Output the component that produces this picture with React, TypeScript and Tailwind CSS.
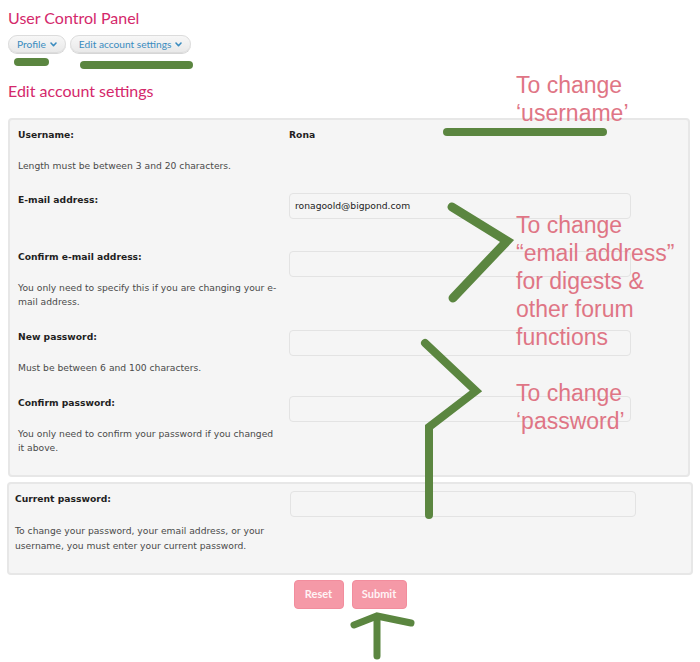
import type { ReactNode } from "react";

const formFont = { fontFamily: '"DejaVu Sans", Verdana, sans-serif' };

// 파란 글씨 알약 탭
const Pill = ({ children }: { children: ReactNode }) => (
  <button className="flex h-[18px] items-center gap-[4px] rounded-full border border-[#dcdcdc] bg-gradient-to-b from-[#f7f7f7] to-[#e9e9e9] px-[8px] text-[10.2px] leading-none text-[#3b8cbf] shadow-[0_1px_0_#d6d6d6]">
    {children}
    <svg viewBox="0 0 8 6" className="h-[5px] w-[7px]" aria-hidden="true">
      <path d="M1 1.2 L4 4.4 L7 1.2" fill="none" stroke="#3b8cbf" strokeWidth="1.9" strokeLinecap="round" strokeLinejoin="round" />
    </svg>
  </button>
);

const Field = ({ w, mt = "mt-0" }: { w: string; mt?: string }) => (
  <div className={`h-[26px] rounded-[4px] border-[1.5px] border-[#e3e3e3] bg-[#f5f5f5] ${w} ${mt}`} />
);

const Row = ({
  label,
  help,
  labelWidth,
  children,
  className,
}: {
  label: string;
  help?: ReactNode;
  labelWidth: string;
  children?: ReactNode;
  className?: string;
}) => (
  <div className={`flex ${className ?? ""}`}>
    <div className={`shrink-0 ${labelWidth}`}>
      <div className="text-[9.2px] font-bold leading-[14px] text-[#1f1f1f]">{label}</div>
      {help}
    </div>
    <div className="flex-1">{children}</div>
  </div>
);

const Help = ({ children, leading = "leading-[14px]" }: { children: ReactNode; leading?: string }) => (
  <p className={`mt-[17px] whitespace-nowrap text-[9.2px] text-[#4a4a4a] ${leading}`}>{children}</p>
);

const Annotation = ({ lines, className }: { lines: string[]; className: string }) => (
  <div
    className={`absolute text-[23px] leading-[28px] text-[#df7585] ${className}`}
    style={{ fontFamily: '"Liberation Sans", Arial, sans-serif' }}
  >
    {lines.map((l) => (
      <div key={l}>{l}</div>
    ))}
  </div>
);

const App = () => {
  return (
    <div className="relative h-[662px] w-[700px] overflow-hidden bg-white">
      <div className="px-[8px] pt-[8px]" style={{ fontFamily: "Lato, sans-serif" }}>
        <h1 className="text-[16px] leading-5 text-[#d4286b]">User Control Panel</h1>
        <div className="mt-[7px] flex gap-[4px]">
          <Pill>Profile</Pill>
          <Pill>Edit account settings</Pill>
        </div>
        <h2 className="mt-[28px] text-[16px] leading-5 text-[#d4286b]">Edit account settings</h2>
      </div>

      <div style={formFont}>
        <section className="ml-[8px] mr-[10px] mt-[17px] rounded-[4px] border-2 border-[#e7e7e7] bg-[#f5f5f5] pb-[20px] pl-[8px] pt-[8px]">
          <Row
            label="Username:"
            labelWidth="w-[271px]"
            help={<Help>Length must be between 3 and 20 characters.</Help>}
            className="mb-[20px]"
          >
            <div className="text-[9.2px] font-bold leading-[14px] text-[#1f1f1f]">Rona</div>
          </Row>
          <Row label="E-mail address:" labelWidth="w-[271px]" className="mb-[31px]">
            <div className="flex h-[26px] w-[342px] items-center rounded-[4px] border-[1.5px] border-[#e3e3e3] bg-[#f5f5f5] px-[5px] text-[9.2px] text-[#222]">
              ronagoold@bigpond.com
            </div>
          </Row>
          <Row
            label="Confirm e-mail address:"
            labelWidth="w-[271px]"
            help={
              <Help>
                You only need to specify this if you are changing your e-
                <br />
                mail address.
              </Help>
            }
            className="mb-[21px]"
          >
            <Field w="w-[342px]" mt="mt-[1px]" />
          </Row>
          <Row
            label="New password:"
            labelWidth="w-[271px]"
            help={<Help>Must be between 6 and 100 characters.</Help>}
            className="mb-[21px]"
          >
            <Field w="w-[342px]" />
          </Row>
          <Row
            label="Confirm password:"
            labelWidth="w-[271px]"
            help={
              <Help>
                You only need to confirm your password if you changed
                <br />
                it above.
              </Help>
            }
          >
            <Field w="w-[342px]" />
          </Row>
        </section>

        <section className="mx-[7px] mt-[5px] rounded-[4px] border-2 border-[#e7e7e7] bg-[#f5f5f5] pb-[20px] pl-[6px] pt-[8px]">
          <Row
            label="Current password:"
            labelWidth="w-[275px]"
            help={
              <Help leading="leading-[15px]">
                To change your password, your email address, or your
                <br />
                username, you must enter your current password.
              </Help>
            }
          >
            <Field w="w-[346px]" mt="-mt-[1px]" />
          </Row>
        </section>

        <div className="mt-[5px] flex justify-center gap-[8px]" style={{ fontFamily: "Lato, sans-serif" }}>
          <button className="h-[29px] w-[50px] rounded-[4px] border border-[#f28d9d] bg-[#f599a7] text-[11px] font-bold text-[#fff3f5]">
            Reset
          </button>
          <button className="h-[29px] w-[55px] rounded-[4px] border border-[#f28d9d] bg-[#f599a7] text-[11px] font-bold text-[#fff3f5]">
            Submit
          </button>
        </div>
      </div>

      {/* 손그림 주석 */}
      <Annotation lines={["To change", "‘username’"]} className="left-[516px] top-[71px]" />
      <Annotation
        lines={["To change", "“email address”", "for digests &", "other forum", "functions"]}
        className="left-[516px] top-[211px]"
      />
      <Annotation lines={["To change", "‘password’"]} className="left-[516px] top-[379px]" />

      <svg className="pointer-events-none absolute inset-0" width="700" height="662" viewBox="0 0 700 662" aria-hidden="true">
        <g fill="none" stroke="#5b8640" strokeLinecap="round" strokeLinejoin="miter">
          <path d="M18 62 L45 62" strokeWidth="8" />
          <path d="M84 65 L189 65" strokeWidth="8" />
          <path d="M447 132 L603 132" strokeWidth="8" />
          <path d="M452 207 L507 241 L453 298" strokeWidth="9" />
          <path d="M425 343 L476 391 L429 427 L429 515" strokeWidth="8" />
          <path d="M377 656 L377 617" strokeWidth="7" />
          <path d="M354 625 L377 616 L411 623" strokeWidth="7" />
        </g>
      </svg>
    </div>
  );
};

export default App;
